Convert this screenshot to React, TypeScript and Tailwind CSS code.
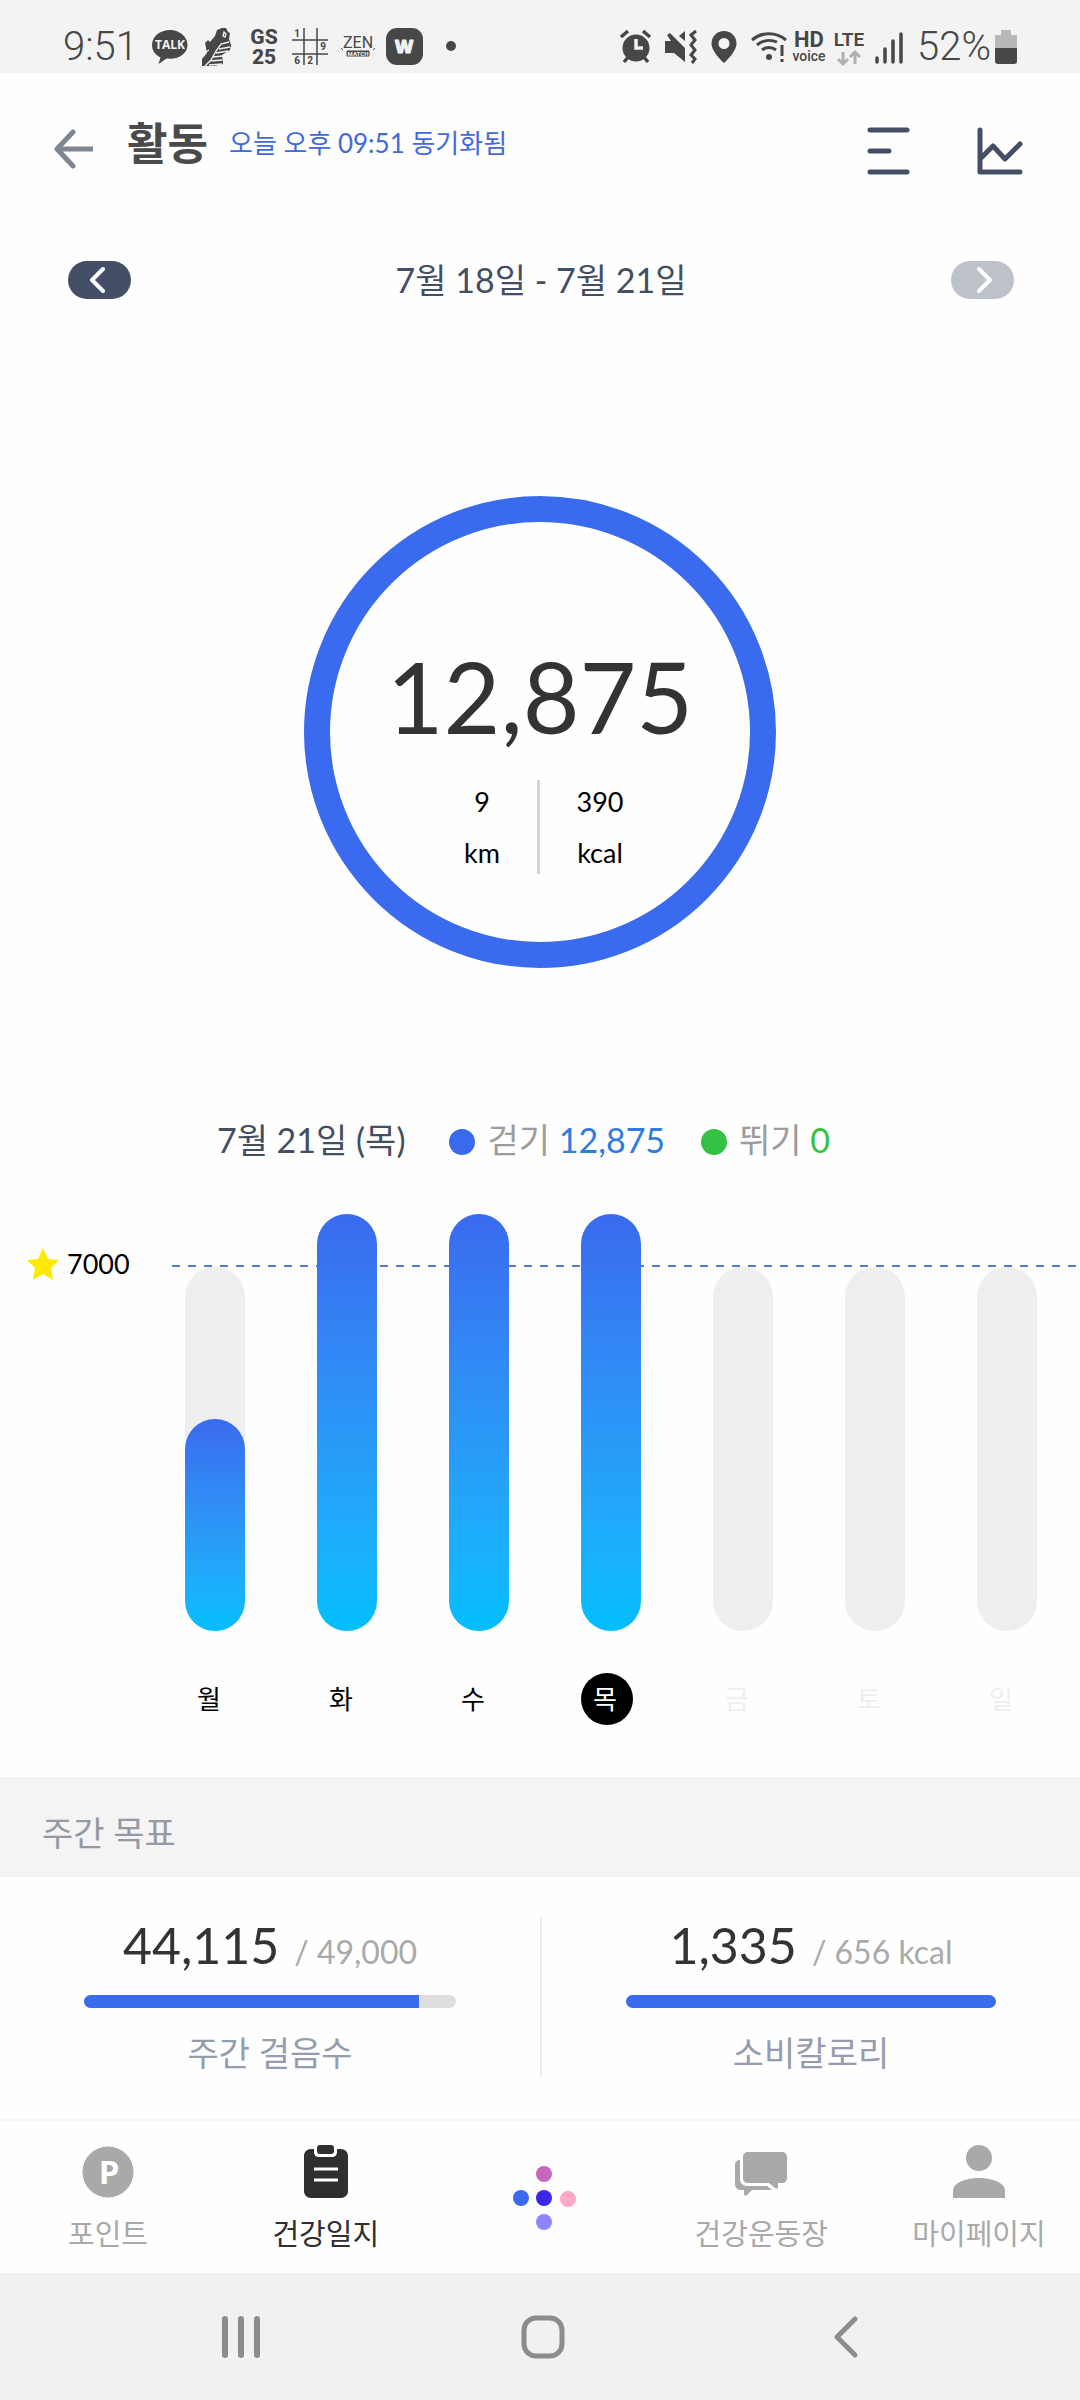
import { useState } from "react";

const DAYS = [
    { label: "월", fill: 212, track: true, state: "past" },
    { label: "화", fill: 417, track: false, state: "past" },
    { label: "수", fill: 417, track: false, state: "past" },
    { label: "목", fill: 417, track: false, state: "today" },
    { label: "금", fill: 0, track: true, state: "future" },
    { label: "토", fill: 0, track: true, state: "future" },
    { label: "일", fill: 0, track: true, state: "future" },
];

const GOALS = [
    { value: "44,115", target: "/ 49,000", percent: 90, label: "주간 걸음수" },
    { value: "1,335", target: "/ 656 kcal", percent: 100, label: "소비칼로리" },
];

function StatusBar() {
    return (
        <div className="flex h-[73px] items-center justify-between bg-[#f3f3f3] pt-5 pl-[63px] pr-[63px] font-[Roboto,sans-serif] text-[#474747]">
            <div className="flex items-center">
                <span className="w-[89px] text-[40px] leading-10 font-light">9:51</span>
                {/* 알림 아이콘 */}
                <svg width="310" height="46" viewBox="0 -4 310 46" fill="currentColor">
                    <path d="M18 2C8 2 0 8.500 0 17c0 5.500 3.500 10 8.500 12.500L6.500 36l8-5.500 3.500.3c10 0 17.500-6 17.500-13.800S28 2 18 2Z" />
                    <text x="18" y="21" fill="#f3f3f3" fontSize="12" fontWeight="700" textAnchor="middle" fontFamily="Open Sans, sans-serif">TALK</text>
                    <path d="M65 2l5-2h4l2 4 2 1-1 6 2 6-1 5-8 5 1 9-9 2H50l0-7 5-6-2-10 3-3 2 2 5-6 2-6Z" />
                    <path d="M77 14l-8 2-5 7-5 9-6 6M72 4l2 2-1 3-2-1ZM78 19l-11 2M76 23l-12 2M71 28l-10 1M70 32l-12 1M70 36l-13 1M54 24l3-2" fill="none" stroke="#f3f3f3" strokeWidth="1.300" />
                    <text x="112" y="16" fontSize="21" fontWeight="800" textAnchor="middle">GS</text>
                    <text x="112" y="36" fontSize="21" fontWeight="800" textAnchor="middle">25</text>
                    <path d="M152 0v37M165 0v37M140 12h36M140 26h36" stroke="currentColor" strokeWidth="1.500" />
                    <text x="145" y="9" fontSize="10" fontWeight="700" textAnchor="middle">1</text>
                    <text x="171" y="22" fontSize="10" fontWeight="700" textAnchor="middle">9</text>
                    <text x="145" y="36" fontSize="10" fontWeight="700" textAnchor="middle">6</text>
                    <text x="158" y="36" fontSize="10" fontWeight="700" textAnchor="middle">2</text>
                    <text x="206" y="20" fontSize="16" textAnchor="middle">ZEN</text>
                    <path d="M195 23h22v5h-22zM189 20l2 2M223 20l-2 2" stroke="currentColor" />
                    <text x="206" y="28" fill="#f3f3f3" fontSize="6" fontWeight="700" textAnchor="middle">MATCH</text>
                    <rect x="234" width="37" height="37" rx="11" />
                    <text x="252" y="25" fill="#f3f3f3" stroke="#f3f3f3" strokeLinejoin="round" fontSize="18" fontWeight="800" textAnchor="middle" fontFamily="Open Sans, sans-serif">W</text>
                    <circle cx="299" cy="18" r="5" />
                </svg>
            </div>
            <div className="flex items-center">
                <svg width="286" height="44" viewBox="0 -4 286 44" fill="currentColor">
                    <circle cx="17" cy="19" r="13.500" />
                    <path d="M2 8l7-6M31 8l-7-6M5 33l5-6M29 33l-5-6" stroke="currentColor" strokeWidth="3.500" />
                    <path d="M17 10v9h7" fill="none" stroke="#f3f3f3" strokeWidth="3.500" />
                    <path d="M46 12h6l-4-6 3-2 15 15v14L55 24h-9ZM66 2v10l-6-5Z" />
                    <path d="M77 2l-5 4 4 5-4 5 4 5-4 5 4 4-3 4" fill="none" stroke="currentColor" strokeWidth="3" />
                    <path fillRule="evenodd" d="M105 2c-7 0-12.500 5.500-12.500 12.500C92.500 23 105 34 105 34s12.500-11 12.500-19.500C117.500 7.500 112 2 105 2Zm0 7a5.500 5.500 0 1 1 0 11 5.500 5.500 0 0 1 0-11Z" />
                    <path d="M133 11a26 26 0 0 1 34 0M138 16a19 19 0 0 1 20-3M143 21a11 11 0 0 1 14 0" fill="none" stroke="currentColor" strokeWidth="3" />
                    <circle cx="150" cy="28" r="3" />
                    <path d="M163 16v11M163 30v3" stroke="currentColor" strokeWidth="3" />
                    <text x="190" y="18" fontSize="22" fontWeight="700" textAnchor="middle">HD</text>
                    <text x="190" y="32" fontSize="14" fontWeight="500" textAnchor="middle">voice</text>
                    <text x="230" y="17" fontSize="19" fontWeight="600" textAnchor="middle">LTE</text>
                    <path d="M224 23v12m-5-5 5 5 5-5M236 35V23m-5 5 5-5 5 5" fill="none" stroke="#b0b0b0" strokeWidth="3" />
                    <path d="M258 29v4M266 20v13M274 12v21M282 5v28" stroke="currentColor" strokeWidth="3.500" strokeLinecap="round" />
                </svg>
                <span className="pl-3 pr-1 text-[40px] leading-10 font-light">52%</span>
                <svg width="22" height="34" viewBox="0 0 22 34">
                    <path d="M6 0h10v5h6v13H0V5h6Z" fill="#b8b8b8" />
                    <path d="M0 18h22v13a3 3 0 0 1-3 3H3a3 3 0 0 1-3-3Z" fill="#474747" />
                </svg>
            </div>
        </div>
    );
}

function Header() {
    return (
        <header className="flex items-center pt-[38px] pl-[53px] pr-[57px]">
            <button aria-label="뒤로" className="mt-3">
                <svg width="40" height="40" viewBox="0 0 40 40" fill="none" stroke="#7f8693" strokeWidth="5">
                    <path d="M40 20H4" />
                    <path d="M20 3L4 20l16 17" strokeLinecap="round" strokeLinejoin="round" />
                </svg>
            </button>
            <h1 className="pl-[34px] text-[44px] leading-[56px] font-bold text-[#4a4a4a]">활동</h1>
            <p className="pl-[21px] text-[26px] leading-[56px] text-[#4169dd]">오늘 오후 09:51 동기화됨</p>
            <div className="mt-4 ml-auto flex gap-[66px]">
                <button aria-label="목록">
                    <svg width="44" height="48" viewBox="0 0 44 48" stroke="#444f66" strokeWidth="5" strokeLinecap="round">
                        <path d="M3 3h37M3 24h19M3 45h37" />
                    </svg>
                </button>
                <button aria-label="차트">
                    <svg width="46" height="48" viewBox="0 0 46 48" fill="none" stroke="#444f66" strokeWidth="5" strokeLinecap="round" strokeLinejoin="round">
                        <path d="M3 3v42h40M4 31l12-12 12 13 15-15" />
                    </svg>
                </button>
            </div>
        </header>
    );
}

function WeekNav() {
    return (
        <div className="flex items-center justify-between pt-[85px] pl-[68px] pr-[66px]">
            <button aria-label="이전 주" className="flex h-[38px] w-[63px] items-center justify-center rounded-full bg-[#444f66]">
                <svg width="20" height="28" viewBox="0 0 20 28" fill="none" stroke="#fff" strokeWidth="4" strokeLinecap="round" strokeLinejoin="round">
                    <path d="M13 3L2 14l11 11" />
                </svg>
            </button>
            <p className="text-[34px] leading-[40px] text-[#434e63]">7월 18일 - 7월 21일</p>
            <button aria-label="다음 주" className="flex h-[38px] w-[63px] items-center justify-center rounded-full bg-[#bdc2ca]">
                <svg width="20" height="28" viewBox="0 0 20 28" fill="none" stroke="#fff" strokeWidth="4" strokeLinecap="round" strokeLinejoin="round">
                    <path d="M7 3l11 11L7 25" />
                </svg>
            </button>
        </div>
    );
}

function StepRing() {
    return (
        <div className="mx-auto mt-[196px] flex size-[472px] flex-col items-center rounded-full border-[26px] border-[#3a6aee]">
            <p className="pt-[114px] text-[98px] leading-[120px] text-[#333333]">12,875</p>
            <div className="mt-5 flex pl-2 text-center text-[27px] leading-[51px] text-black">
                <p className="w-[109px]">9<br />km</p>
                <div className="my-1 w-[3px] bg-[#d3d3d3]" />
                <p className="w-[121px]">390<br />kcal</p>
            </div>
        </div>
    );
}

function Legend() {
    return (
        <div className="flex justify-center pt-[148px] pr-[33px] text-[34px] leading-[48px]">
            <span className="text-[#434e63]">7월 21일 (목)</span>
            <span className="flex items-center pl-[44px] text-[#9c9c9c]">
                <i className="mt-1 mr-3 size-[26px] rounded-full bg-[#3a6aee]" />
                걷기&nbsp;<b className="font-normal text-[#2f7be0]">12,875</b>
            </span>
            <span className="flex items-center pl-[36px] text-[#9c9c9c]">
                <i className="mt-1 mr-3 size-[26px] rounded-full bg-[#34c244]" />
                뛰기&nbsp;<b className="font-normal text-[#34c244]">0</b>
            </span>
        </div>
    );
}

function WeekChart() {
    const [selected, setSelected] = useState("목");

    return (
        <div className="flex pt-[50px]">
            <div className="flex w-[171px] shrink-0 items-center self-start pt-[32px] pl-[26px] text-[27px] leading-[36px] text-black">
                <svg width="34" height="34" viewBox="0 0 34 34" fill="#ffe900" className="mr-[7px]">
                    <path d="M17 1l5 11 11 1-8 8 2 12-10-6-10 6 2-12-8-8 11-1Z" />
                </svg>
                7000
            </div>
            <div className="relative grow pl-[14px] pr-[43px]">
                {/* 목표선 */}
                <svg className="absolute top-[51px] left-0 w-full" height="2">
                    <path d="M1 1h3000" stroke="#5c79c8" strokeWidth="2" strokeDasharray="8 8" />
                </svg>
                <div className="relative flex justify-between">
                    {DAYS.map((day) => (
                        <div key={day.label} className="w-[60px]">
                            <div className="relative flex h-[417px] flex-col justify-end">
                                {day.track && <div className="h-[364px] rounded-full bg-[#eeeeee]" />}
                                <div
                                    className="absolute bottom-0 w-full rounded-full bg-linear-to-b from-[#3a6aee] to-[#00bfff]"
                                    style={{ height: day.fill }}
                                />
                            </div>
                            <button
                                onClick={() => setSelected(day.label)}
                                className={`mt-[42px] size-[52px] rounded-full pr-1 text-[26px] leading-[52px] ${
                                    day.label === selected
                                        ? "bg-black text-white"
                                        : day.state === "future"
                                          ? "text-[#eeeeee]"
                                          : "text-black"
                                }`}
                            >
                                {day.label}
                            </button>
                        </div>
                    ))}
                </div>
            </div>
        </div>
    );
}

function WeeklyGoals() {
    return (
        <section>
            <h2 className="mt-[52px] bg-[#f4f4f4] pt-8 pb-5 pl-[42px] text-[34px] leading-[48px] text-[#9499a3]">주간 목표</h2>
            <div className="grid grid-cols-2 pt-10 pb-[42px]">
                {GOALS.map((goal) => (
                    <div key={goal.label} className="flex flex-col items-center border-[#ececec] px-[84px] even:border-l-2">
                        <p className="flex items-baseline gap-[15px] text-[50px] leading-[56px] text-[#333333]">
                            {goal.value}
                            <span className="text-[32px] leading-[32px] text-[#a9a9a9]">{goal.target}</span>
                        </p>
                        <div className="mt-[22px] h-[13px] w-full overflow-hidden rounded-full bg-[#dedede]">
                            <div className="h-full bg-[#3a6aee]" style={{ width: `${goal.percent}%` }} />
                        </div>
                        <p className="mt-[21px] text-[34px] leading-[48px] text-[#959cad]">{goal.label}</p>
                    </div>
                ))}
            </div>
        </section>
    );
}

function TabBar() {
    const tab = "flex w-[140px] flex-col items-center gap-4 whitespace-nowrap";

    return (
        <nav className="flex justify-between border-t-2 border-[#f7f7f7] pt-6 pb-[19px] pl-[38px] pr-[31px] text-[29px] leading-[40px] text-[#a9a9a9]">
            <a href="#point" className={tab}>
                <svg width="52" height="53" viewBox="0 0 52 53">
                    <circle cx="26" cy="27" r="25.500" fill="#a9a9a9" />
                    <text x="27" y="39" fill="#fff" fontSize="33" fontWeight="700" textAnchor="middle" fontFamily="Open Sans, sans-serif">P</text>
                </svg>
                포인트
            </a>
            <a href="#diary" className={`${tab} text-[#2f2f2f]`}>
                <svg width="44" height="53" viewBox="0 0 44 53" fill="#2f2f2f">
                    <path d="M7 4h3v3c0 3 2 5 5 5h13c3 0 5-2 5-5V4h4c4 0 7 3 7 7v35c0 4-3 7-7 7H7c-4 0-7-3-7-7V11c0-4 3-7 7-7Z" />
                    <rect x="13" width="17" height="9" rx="3" />
                    <path d="M10 24h24M10 35h24" stroke="#fff" strokeWidth="3" />
                </svg>
                건강일지
            </a>
            <a href="#home" aria-label="홈" className={tab}>
                <svg width="64" height="66" viewBox="0 0 64 66" className="mt-5">
                    <circle cx="32" cy="9" r="8" fill="#c766bd" />
                    <circle cx="9" cy="33" r="8" fill="#3a6aee" />
                    <circle cx="32" cy="33" r="8" fill="#3c26e8" />
                    <circle cx="56" cy="34" r="8" fill="#ffa9c8" />
                    <circle cx="32" cy="57" r="8" fill="#8c87ff" />
                </svg>
            </a>
            <a href="#playground" className={tab}>
                <svg width="52" height="53" viewBox="0 0 52 53" fill="#a9a9a9">
                    <path d="M13 7h34c3 0 5 2 5 5v21c0 3-2 5-5 5h-4v4c0 2-2 2-3 1l-6-5H13c-3 0-5-2-5-5V12c0-3 2-5 5-5Z" />
                    <path d="M5 15v19c0 4 3 7 7 7h20l5 4H17l-5 5c-1 1-3 1-3-1v-4H6c-3 0-6-2-6-6V20c0-3 2-5 5-5Z" />
                </svg>
                건강운동장
            </a>
            <a href="#mypage" className={tab}>
                <svg width="52" height="53" viewBox="0 0 52 53" fill="#a9a9a9">
                    <circle cx="26" cy="13" r="13" />
                    <path d="M0 53v-7c0-8 12-13 26-13s26 5 26 13v7Z" />
                </svg>
                마이페이지
            </a>
        </nav>
    );
}

function SystemNav() {
    return (
        <div className="flex grow items-center justify-between bg-[#f1f1f1] py-8 pl-[216px] pr-[210px]">
            <button aria-label="최근 앱">
                <svg width="50" height="50" viewBox="0 0 50 50" stroke="#8c8c8c" strokeWidth="6" strokeLinecap="round">
                    <path d="M9 7v36M25 7v36M41 7v36" />
                </svg>
            </button>
            <button aria-label="홈 화면">
                <svg width="50" height="50" viewBox="0 0 50 50" fill="none" stroke="#8c8c8c" strokeWidth="5">
                    <rect x="6" y="6" width="38" height="38" rx="12" />
                </svg>
            </button>
            <button aria-label="뒤로 가기">
                <svg width="50" height="50" viewBox="0 0 50 50" fill="none" stroke="#8c8c8c" strokeWidth="5" strokeLinecap="round" strokeLinejoin="round">
                    <path d="M35 7L17 25l18 18" />
                </svg>
            </button>
        </div>
    );
}

export default function App() {
    return (
        <div className="flex min-h-screen flex-col bg-[#fefefe] font-[Lato,'Noto_Sans_CJK_KR',sans-serif]">
            <StatusBar />
            <Header />
            <WeekNav />
            <StepRing />
            <Legend />
            <WeekChart />
            <WeeklyGoals />
            <TabBar />
            <SystemNav />
        </div>
    );
}
